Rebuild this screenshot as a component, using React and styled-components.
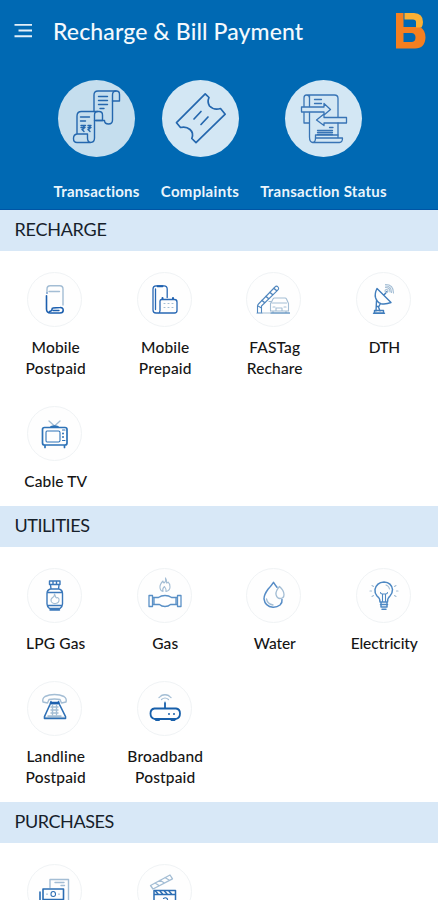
import React from 'react';
import styled, { createGlobalStyle } from 'styled-components';

const GlobalStyle = createGlobalStyle`
  * {
    box-sizing: border-box;
  }

  body {
    margin: 0;
    background: #fff;
    font-family: Lato, 'Open Sans', sans-serif;
  }
`;

const Screen = styled.div`
  height: 900px;
  overflow: hidden;
  background: #fff;
`;

const Header = styled.header`
  height: 210px;
  background: #0069b3;
  border-bottom: 1px solid #0055a5;
`;

const TopBar = styled.div`
  display: flex;
  align-items: center;
  height: 64px;
  padding: 0 12px 0 14px;
`;

const MenuButton = styled.button`
  width: 19px;
  height: 16px;
  margin-right: 20px;
  padding: 0;
  border: 0;
  background: none;

  svg {
    display: block;
  }
`;

const Title = styled.h1`
  flex: 1;
  margin: 0 0 2px;
  font-size: 23px;
  font-weight: 500;
  line-height: 28px;
  letter-spacing: 0.12px;
  white-space: nowrap;
  color: #f4f9fd;
`;

const Logo = styled.svg`
  display: block;
  width: 31px;
  height: 36px;
  margin-top: -3px;
`;

const QuickLinks = styled.div`
  display: flex;
  gap: 21px;
  padding: 16px 0 0 53px;
`;

const QuickLink = styled.div`
  display: flex;
  flex-direction: column;
  align-items: center;
  width: ${(props) => props.$width}px;
`;

const QuickCircle = styled.div`
  width: 77px;
  height: 77px;
  border-radius: 50%;
  background: ${(props) => props.$tint || '#d3e7f4'};
`;

const QuickLabel = styled.span`
  margin-top: 24px;
  font-size: 15px;
  font-weight: 700;
  line-height: 20px;
  letter-spacing: ${(props) => props.$spacing || 0}px;
  white-space: nowrap;
  color: #eaf5fc;
`;

const SectionTitle = styled.h2`
  height: 41px;
  margin: 0;
  padding-left: 14.5px;
  background: #d8e8f7;
  font-size: 18px;
  font-weight: 400;
  line-height: 39px;
  letter-spacing: ${(props) => props.$spacing || 0}px;
  color: #16202a;
`;

const Grid = styled.div`
  display: grid;
  grid-template-columns: repeat(4, 1fr);
  row-gap: 26.5px;
  padding: 21px 0 13.5px;
`;

const Item = styled.div`
  display: flex;
  flex-direction: column;
  align-items: center;
`;

const ItemCircle = styled.div`
  width: 55px;
  height: 55px;
  border: 1px solid #f0f3f5;
  border-radius: 50%;
  background: #fefefe;

  svg {
    display: block;
    margin: -1px;
  }
`;

const ItemLabel = styled.span`
  margin-top: 10px;
  margin-bottom: 0.5px;
  padding-left: 2px;
  font-size: 15.5px;
  font-weight: 500;
  line-height: 21px;
  letter-spacing: ${(props) => props.$spacing ?? 0.15}px;
  text-align: center;
  white-space: pre-line;
  color: #151515;
`;

const Svg = styled.svg`
  display: block;
  fill: none;
  stroke: ${(props) => props.$color || '#3a78bf'};
  stroke-width: ${(props) => props.$stroke || 1.1};
  stroke-linecap: round;
  stroke-linejoin: round;

  .light {
    stroke: #a3bdd4;
  }

  .dark {
    stroke: #1c5fae;
  }
`;

const SmallIcon = ({ children, ...rest }) => (
  <Svg width="55" height="55" viewBox="0 0 55 55" {...rest}>{children}</Svg>
);

const BigIcon = ({ children, ...rest }) => (
  <Svg width="77" height="77" viewBox="0 0 77 77" $color="#2467ae" $stroke={1.4} {...rest}>{children}</Svg>
);

const TransactionsIcon = () => (
  <BigIcon>
    <path d="M36 31.500V15q0-4 4-4h18.500q3 0 3 3.500v6.500h-7V40q0 4-4 4t-4-3.500H38" />
    <path d="M54.500 21v-6q0-4 3.500-4" />
    <path d="M40.500 16.500h9M40.500 20.500h9M40.500 24.500h9M42 28.500h4" />
    <path d="M19 54V36q0-4.500 4.500-4.500H41q3.500 0 3.500 3.500v5.500h-8V58q0 4.500-4 4.500H19q-3.500 0-3.500-4t3.500-4.500h10.500v4q0 4.500 3.500 4.500" />
    <path d="M36.500 40.500V35q0-3.500 3-3.500M22.500 37h9M22.500 41h5" />
    <path d="M23 45.500h4.500M23 47.500h4M25 45.500q3 2.500-1 4l2 2M30 45.500h3M30 47.500h3M31 45.500q3 2.500-1 4l2 2" />
  </BigIcon>
);

const TicketIcon = () => (
  <BigIcon $stroke={1.7}>
    <path d="M43.200 13.800 47 17.500Q45 22 47.500 26Q52 30.500 58.500 28.500L63.200 34.200 34 62.600 29.800 58.500Q32 53 28 49.500Q24 46 18.500 47.500L14.500 42.700Z" />
    <path d="m32 39 7-7.500M39 44.500l7-7.500" />
  </BigIcon>
);

const StatusIcon = () => (
  <BigIcon $color="#3874b5" $stroke={1.3}>
    <path d="M24.500 26.500V18q0-3-3-3h28q3.500 0 3.500 3.500V37M53 43v15M21.500 15q-2.500 0-2.500 3v8.500M24.500 15v11.500M19 32.500v10.500h5.500M24.500 32.500V57q0 5.500 3.500 5.500h26.500q3 0 3-4.500H30.500q0 4.500-3 4.500" />
    <path d="M30.500 58v-3H53" />
    <path d="M16.500 27H39v-3.500l6.500 6-6.500 5.500v-3H16.500ZM61.500 37.500H39V34l-7.500 6 7.500 5.500V43h22.500Z" />
    <path d="M29.500 19.500h7M29.500 23.500h7M44.500 47.500h3.500M32.500 50.500h15M32.500 52.500h15M32.500 54.500h15" />
  </BigIcon>
);

const PostpaidIcon = () => (
  <SmallIcon>
    <path className="light" strokeWidth="1.4" d="M20 20v-3q0-3.200 3.200-3.200h9.600q3.200 0 3.200 3.200V33M22 19.500h10.500" />
    <path className="dark" strokeWidth="1.6" d="M19.500 23.800V37q0 4 4 4H33q3.200 0 3.200-2.800T33 35.500q-4.500 0-7 .5-1 0-1 1.500t-2.500 2" />
    <path className="dark" strokeWidth="1.3" d="M20 20.800v.4M26 38.500h6" />
  </SmallIcon>
);

const PrepaidIcon = () => (
  <SmallIcon $color="#2868b4">
    <path strokeWidth="1.3" d="M21 41h-2q-3 0-3-3V17q0-3.200 3-3.200h8q3.200 0 3.200 3.200v8.500M18.500 17v20.500" />
    <path className="dark" strokeWidth="2" d="M20.500 14.300h5M25.500 27v-1M36 27v-1" />
    <path strokeWidth="1.3" d="M25 27.500h12.500q2.500 0 2.500 2.500v8.500q0 2.500-2.500 2.500H21.500q1.500-.5 1.500-2.500V29q0-1.500 2-1.500Z" />
    <path className="light" d="M27 31.500h1M31 31.500h1M35 31.500h1M27 35.500h1M31 35.500h1M35 35.500h1" />
  </SmallIcon>
);

const TollIcon = () => (
  <SmallIcon $color="#5187be">
    <path d="M11.500 40.500v-6.500q0-1 1-2L29 15q1.500-1.800 3 0t-.5 3.300L15.500 34v6.500M11 41h5M12 34l3.500 2" />
    <path strokeWidth="1.6" d="m16 28.500 2.500 2M20 24.500l2.500 2M24 20.500l2.500 2M28 16.500l2.500 2" />
    <path className="light" d="M16 41h27.500M24.500 32l2.500-5q.5-1 1.500-1H39q1 0 1.500 1l2 4.500v7.500H24.500v-8ZM26.500 31h14M27 35h2M38 35h2M27 39v2M40 39v2M30 39v-3h6v3M23 29.500h2" />
    <path d="M25 41h18.500" />
  </SmallIcon>
);

const DishIcon = () => (
  <SmallIcon $color="#407dbc">
    <path strokeWidth="1.4" d="M21 16.500q-2.500 5-1.500 9 1.500 5 5.500 6.200 5 .8 10-1.200ZM28 23l3-3.500M20.500 28.500l-.5 10.500M24.500 31.500l-2 3.500 1.500 4M20.500 34.500h2.500M18.500 41v-2.500h9V41ZM17.500 41.300h11" />
    <path className="light" d="M29 19q0-1.500 1.500-1.500t1.500 1.500-1.500 1.500-1.500-1.500M29.500 15.500q4.500 0 4.500 4.500M29.500 14q6 0 6 6.500M29.500 12.500q8 0 8 8.500" />
  </SmallIcon>
);

const TvIcon = () => (
  <SmallIcon $color="#2d72b7">
    <path className="light" strokeWidth="1.3" d="m22 15 5.500 5 5.500-5" />
    <path strokeWidth="1.7" d="M17.500 21.500h20.500q2 0 2 2V37q0 2-2 2H17.500q-2 0-2-2V23.500q0-2 2-2ZM18 40v1.500M37.500 40v1.500M24 20.800q3.500-1.500 7 0" />
    <path d="M20 25h11.500q1.500 0 1.500 1.500v8q0 1.500-1.500 1.500H20q-1 0-1-1.500v-8Q19 25 20 25ZM35.500 24h2.500M35.500 34.500h2.500" />
    <path strokeWidth="2" d="M36 27.500v.1M36 31v.1" />
  </SmallIcon>
);

const CylinderIcon = () => (
  <SmallIcon $color="#3b78ba">
    <path strokeWidth="1.4" d="M23.500 21h8.500q3.500 1 3.500 4.500V36q0 2.500-2.500 4.500H22.500q-2.500-2-2.500-4.500V25.500q0-3.500 3.500-4.500ZM24 21l-.5-4M31.500 21l.5-4M22.500 13h10.500v3.500h-10.500ZM26 16.500V14M29.500 16.500V14M20.500 24.500h14.500M20.500 37.500h14.500M23 42h9.500" />
    <path className="light" d="M27.500 26q0 3-2 3.500-2.500 2-1 4.500 1.500 2 4 1.500 4-.5 3.500-4.500-.5-1-1.500-1.500-1.500 1-2-1Z" />
  </SmallIcon>
);

const PipeIcon = () => (
  <SmallIcon $color="#5a90c6">
    <path strokeWidth="1.3" d="M12 27.500h3.500V38.500H12ZM40.500 27.500H44V38.500h-3.500ZM15.500 29.500h6q2.500-2 6.500-2t6.500 2h6M15.500 36.500h7q2 2 5.500 2t5.500-2h7M17 29.500v7M39 29.500v7" />
    <path className="light" d="M28.500 10q1 3-1.500 5-1-1-1-2-3.500 3.500-3 7 .5 3 3 3.500-1-3 1.500-5 2 2.500 1.500 5 4-1 4-4.500t-2-5q-.5 1-1.500 1 .5-3-1-5Z" />
  </SmallIcon>
);

const WaterIcon = () => (
  <SmallIcon $color="#568cc6">
    <path strokeWidth="1.5" d="M36 31.500q.5 3-2 5.500-3 2.500-7 2.300-8-1-9-8.500 0-4 4-9.500Q25 18 27.500 14.300q2 3 3.500 5" />
    <path className="light" strokeWidth="1.3" d="M33.500 18.500q-4 4.500-3.500 8 1 4 4 4 4 0 4-4t-4.500-8ZM20.500 31q1 5 6.500 6" />
  </SmallIcon>
);

const BulbIcon = () => (
  <SmallIcon $color="#4d88c3">
    <path strokeWidth="1.5" d="M24 34q0-4-3-6-2.500-3-2-6.500Q20.500 14.500 28 14q7.500.5 8.500 7.500 0 4-2.500 6.500-2.500 2-2.500 6ZM25 34v5h6v-5M26 41.200h4M24.500 36.500h7" />
    <path d="M26.500 33.500v-7.500h3v7.500M24.500 24.500q0 1.500 2 1.500M31.500 24.500q0 1.500-2 1.500" />
    <path className="light" d="M14 23h1.500M40.500 23H42M16 17.500l1.500 1M40 17.500l-1.500 1M16 28.500l1.500-1M40 28.500l-1.500-1M30 17q3 1 3.500 4" />
  </SmallIcon>
);

const PhoneIcon = () => (
  <SmallIcon $color="#2d6fb5">
    <path className="light" strokeWidth="1.4" d="M16 21q-1-3.500 2-5.500 4-2 9.500-2t9.500 2q3 2 2 5.500l-4.500 1-1.500-3.500q-5.500-1-11 0L20.500 22ZM24 26h7M24 29h7M24 32h7M25.500 24.500v9M29.500 24.500v9M21 35h13M18 36.500h19" />
    <path strokeWidth="1.6" d="M24 22.500h7.500M24 20.500l-1 3-5.500 12v2h21v-2L32.500 23.500l-1-3" />
    <path className="dark" strokeWidth="2.4" d="M24.500 22h6.500" />
  </SmallIcon>
);

const RouterIcon = () => (
  <SmallIcon $color="#175faa">
    <path strokeWidth="1.8" d="M17.500 27.500h21.500q4 .5 4 5t-4 5.500H17.500q-4-1-4-5.500t4-5ZM28 27V22" />
    <path strokeWidth="2" d="M19 39h3M34.500 39h3M32 33v.1M37 33v.1" />
    <path className="light" strokeWidth="1.2" d="M22 16.500q6-5 12 0M24.500 18.500q3.500-3 7 0M28 20.500v.1M24 14.500q4-2 8 0" />
  </SmallIcon>
);

const CashIcon = () => (
  <SmallIcon $color="#2b6db3">
    <path className="light" strokeWidth="1.4" d="M23 23.500v-8h18.500V36M28 18.500h9M34 21.500h3.500" />
    <path strokeWidth="1.6" d="M16 25h20.500v10.500H16ZM13 28v10M13 38.500h20" />
    <path d="M24 30q0-2.500 2.200-2.500T28.500 30t-2.300 2.500T24 30M20 30v.1M32 30v.1" />
  </SmallIcon>
);

const ClapperIcon = () => (
  <SmallIcon $color="#2b6db3">
    <path className="light" strokeWidth="1.3" d="m13.500 21.500 19.500-10.500 2.500 3.800L16 25ZM18 19l4 2.500M23 16.300l4 2.500M28 13.500l4 2.500" />
    <path strokeWidth="1.5" d="M17 26.500h21.500V42H17ZM17 30.500h21.500" />
    <path strokeWidth="1.5" d="m18.500 27 2.500 3M23 27l2.500 3M27.500 27l2.500 3M32 27l2.500 3" />
    <path d="M26.500 34.500q2-1.500 3.500 0t-1 4" />
  </SmallIcon>
);

const quickLinks = [
  { label: 'Transactions', width: 87, spacing: 0.2, tint: '#c5deee', icon: <TransactionsIcon /> },
  { label: 'Complaints', width: 78, spacing: 0.33, icon: <TicketIcon /> },
  { label: 'Transaction Status', width: 127, spacing: 0.25, icon: <StatusIcon /> },
];

const sections = [
  {
    title: 'RECHARGE',
    spacing: -0.25,
    items: [
      { label: 'Mobile\nPostpaid', icon: <PostpaidIcon /> },
      { label: 'Mobile\nPrepaid', icon: <PrepaidIcon /> },
      { label: 'FASTag\nRechare', icon: <TollIcon /> },
      { label: 'DTH', spacing: -0.4, icon: <DishIcon /> },
      { label: 'Cable TV', icon: <TvIcon /> },
    ],
  },
  {
    title: 'UTILITIES',
    spacing: -0.45,
    items: [
      { label: 'LPG Gas', icon: <CylinderIcon /> },
      { label: 'Gas', icon: <PipeIcon /> },
      { label: 'Water', spacing: -0.1, icon: <WaterIcon /> },
      { label: 'Electricity', spacing: -0.1, icon: <BulbIcon /> },
      { label: 'Landline\nPostpaid', icon: <PhoneIcon /> },
      { label: 'Broadband\nPostpaid', icon: <RouterIcon /> },
    ],
  },
  {
    title: 'PURCHASES',
    spacing: -0.4,
    items: [
      { label: '', icon: <CashIcon /> },
      { label: '', icon: <ClapperIcon /> },
    ],
  },
];

const App = () => {
  return (
    <Screen>
      <GlobalStyle />
      <Header>
        <TopBar>
          <MenuButton aria-label="Menu">
            <svg width="19" height="16" viewBox="0 0 19 16" fill="none" stroke="#e3f0f9" strokeWidth="2">
              <path d="M.5 0.8H18M4.500 6.500H18M.5 12.300H18" />
            </svg>
          </MenuButton>
          <Title>Recharge &amp; Bill Payment</Title>
          <Logo viewBox="0 0 31 36">
            <path fill="#f57f20" d="M1 0h7.500v14H25q5.500 3 5.500 10.500Q30 35.500 20 35.500H1ZM8.500 20v9h8.500q3.500-.5 3.500-4.500T17 20Z" fillRule="evenodd" />
            <path fill="#fbb034" d="M9.500 0H19q9 .5 9 9 0 3-1.500 5.500H21V9q0-2.500-3-2.500H9.500Z" />
          </Logo>
        </TopBar>
        <QuickLinks>
          {quickLinks.map((link) => (
            <QuickLink key={link.label} $width={link.width}>
              <QuickCircle $tint={link.tint}>{link.icon}</QuickCircle>
              <QuickLabel $spacing={link.spacing}>{link.label}</QuickLabel>
            </QuickLink>
          ))}
        </QuickLinks>
      </Header>
      {sections.map((section) => (
        <section key={section.title}>
          <SectionTitle $spacing={section.spacing}>{section.title}</SectionTitle>
          <Grid>
            {section.items.map((item, i) => (
              <Item key={i}>
                <ItemCircle>{item.icon}</ItemCircle>
                <ItemLabel $spacing={item.spacing}>{item.label}</ItemLabel>
              </Item>
            ))}
          </Grid>
        </section>
      ))}
    </Screen>
  );
};

export default App;
